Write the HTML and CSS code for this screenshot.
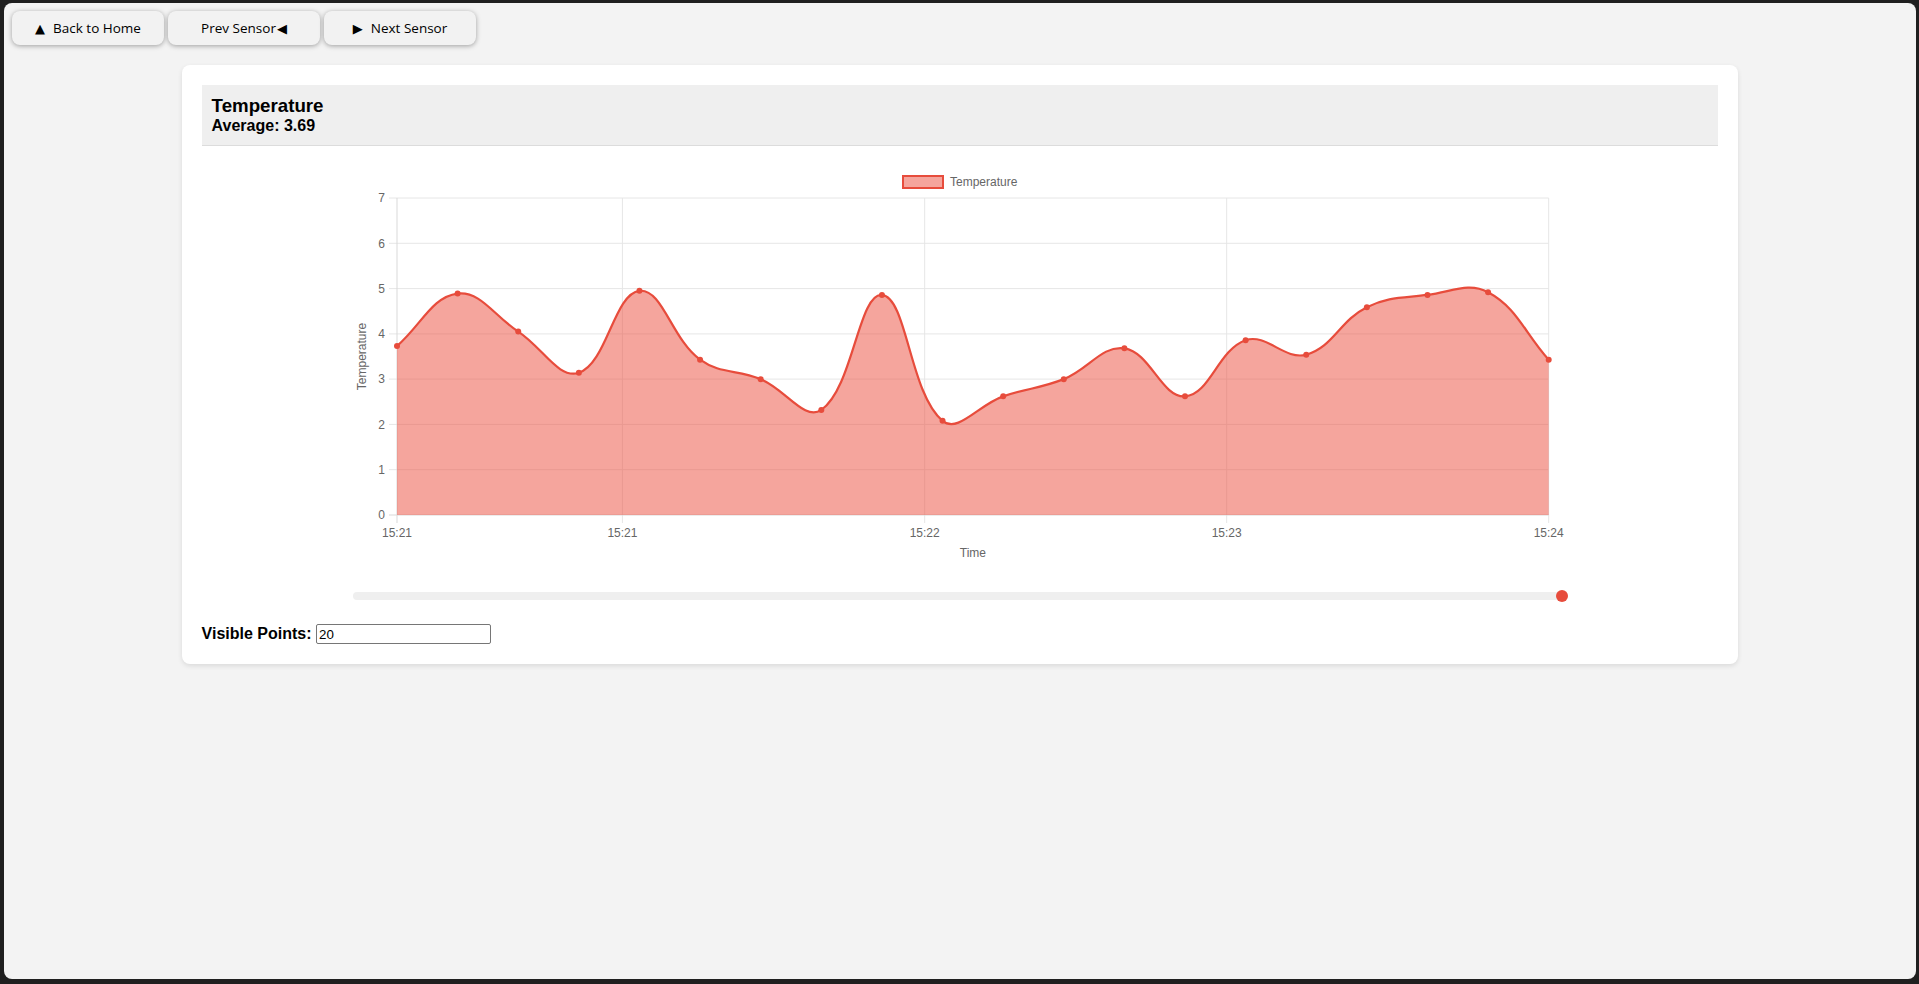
FILE: index.html
```html
<!DOCTYPE html>
<html lang="en">
<head>
<meta charset="utf-8">
<title>Sensor</title>
<link rel="stylesheet" href="styles.css">
</head>
<body>
<div class="window">
  <div class="nav">
    <button class="nav-btn"><span class="glyph glyph-left">▲</span>Back to Home</button>
    <button class="nav-btn">Prev Sensor<span class="glyph glyph-right">◀</span></button>
    <button class="nav-btn"><span class="glyph glyph-left">▶</span>Next Sensor</button>
  </div>

  <div class="card">
    <div class="card-header">
      <h3 class="card-title">Temperature</h3>
      <div class="card-avg">Average: 3.69</div>
    </div>

    <div class="chart-box">
      <svg class="chart" width="1213" height="400" viewBox="0 0 1213 400" xmlns="http://www.w3.org/2000/svg">
        <g class="grid">
          <line x1="36" y1="32" x2="1195.7" y2="32"/>
          <line x1="36" y1="77.3" x2="1195.7" y2="77.3"/>
          <line x1="36" y1="122.6" x2="1195.7" y2="122.6"/>
          <line x1="36" y1="167.9" x2="1195.7" y2="167.9"/>
          <line x1="36" y1="213.1" x2="1195.7" y2="213.1"/>
          <line x1="36" y1="258.4" x2="1195.7" y2="258.4"/>
          <line x1="36" y1="303.7" x2="1195.7" y2="303.7"/>
          <line x1="269.4" y1="32" x2="269.4" y2="357"/>
          <line x1="571.7" y1="32" x2="571.7" y2="357"/>
          <line x1="873.7" y1="32" x2="873.7" y2="357"/>
          <line x1="1195.7" y1="32" x2="1195.7" y2="357"/>
        </g>
        <g class="axis">
          <line x1="44" y1="32" x2="44" y2="357"/>
          <line x1="36" y1="349" x2="1195.7" y2="349"/>
        </g>
        <path id="area" class="area" d=""/>
        <path id="line" class="line" d=""/>
        <g id="points" class="points"></g>
        <g class="ylabels">
          <text x="32" y="36.3">7</text>
          <text x="32" y="81.6">6</text>
          <text x="32" y="126.9">5</text>
          <text x="32" y="172.2">4</text>
          <text x="32" y="217.4">3</text>
          <text x="32" y="262.7">2</text>
          <text x="32" y="308">1</text>
          <text x="32" y="353.3">0</text>
        </g>
        <g class="xlabels">
          <text x="44" y="371">15:21</text>
          <text x="269.4" y="371">15:21</text>
          <text x="571.7" y="371">15:22</text>
          <text x="873.7" y="371">15:23</text>
          <text x="1195.7" y="371">15:24</text>
        </g>
        <text class="axis-title" x="619.9" y="391">Time</text>
        <text class="axis-title" transform="translate(13 190.5) rotate(-90)">Temperature</text>
        <rect class="legend-box" x="550" y="10" width="40" height="12"/>
        <text class="legend-text" x="597" y="20">Temperature</text>
      </svg>
    </div>

    <div class="slider">
      <div class="slider-track"></div>
      <span class="slider-thumb"></span>
    </div>

    <div class="controls">
      <label class="controls-label" for="points">Visible Points:</label>
      <input class="controls-input" id="points" type="text" value="20">
    </div>
  </div>
</div>
<script src="script.js"></script>
</body>
</html>
```

FILE: styles.css
```css
html {
  background: #1f1f1f;
}

body {
  margin: 0;
  background: #1f1f1f;
}

.window {
  margin: 3px 3px 0 4px;
  height: 976px;
  box-sizing: border-box;
  padding: 8px;
  background: #f3f3f3;
  border-radius: 8px;
  overflow: hidden;
  font-family: "Liberation Sans", Arial, sans-serif;
}

.nav {
  display: flex;
  gap: 4px;
}

.nav-btn {
  width: 152px;
  height: 34px;
  display: flex;
  align-items: center;
  justify-content: center;
  padding: 0;
  border: none;
  border-radius: 8px;
  background: #f2f2f2;
  box-shadow: 0 1px 5px rgba(0, 0, 0, 0.35);
  font-family: "Open Sans", "Noto Sans", sans-serif;
  font-size: 13.5px;
  font-weight: 500;
  color: #000;
}

.glyph {
  font-family: "DejaVu Sans", sans-serif;
  font-size: 13px;
}

.glyph-left {
  margin-right: 8px;
}

.glyph-right {
  margin-left: 1px;
}

.card {
  width: 80%;
  margin: 20px auto 0;
  padding: 20px;
  background: #fff;
  border-radius: 8px;
  box-shadow: 0 2px 5px rgba(0, 0, 0, 0.1);
}

.card-header {
  background: #efefef;
  padding: 10px;
  border-bottom: 1px solid #dcdcdc;
}

.card-title {
  margin: 0;
  font-size: 18.72px;
  font-weight: bold;
  color: #000;
}

.card-avg {
  font-size: 16px;
  font-weight: bold;
  color: #000;
}

.chart-box {
  width: 80%;
  margin: 20px auto 0;
  height: 400px;
}

.chart {
  display: block;
  overflow: visible;
}

.grid line {
  stroke: #e6e6e6;
  stroke-width: 1;
}

.axis line {
  stroke: #d9d9d9;
  stroke-width: 1;
}

.area {
  fill: rgba(236, 76, 60, 0.5);
}

.line {
  fill: none;
  stroke: #e74c3c;
  stroke-width: 2.2;
}

.points circle {
  fill: #e74c3c;
}

.ylabels text {
  font-family: "Liberation Sans", Arial, sans-serif;
  font-size: 12px;
  fill: #666;
  text-anchor: end;
}

.xlabels text {
  font-family: "Liberation Sans", Arial, sans-serif;
  font-size: 12px;
  fill: #666;
  text-anchor: middle;
}

.axis-title {
  font-family: "Liberation Sans", Arial, sans-serif;
  font-size: 12px;
  fill: #666;
  text-anchor: middle;
}

.legend-box {
  fill: rgba(236, 76, 60, 0.5);
  stroke: #e74c3c;
  stroke-width: 2;
}

.legend-text {
  font-family: "Liberation Sans", Arial, sans-serif;
  font-size: 12px;
  fill: #666;
}

.slider {
  position: relative;
  width: 80%;
  margin: 26px auto 0;
  height: 8px;
}

.slider-track {
  height: 8px;
  border-radius: 4px;
  background: #efefef;
}

.slider-thumb {
  position: absolute;
  right: -1px;
  top: -2px;
  width: 12px;
  height: 12px;
  border-radius: 50%;
  background: #e74c3c;
}

.controls {
  margin-top: 24px;
  font-size: 16px;
  font-weight: bold;
  color: #000;
}

.controls-input {
  box-sizing: border-box;
  width: 175px;
  height: 20px;
  padding: 1px 2px;
  border: 1px solid #767676;
  border-radius: 2px;
  font-family: "Liberation Sans", Arial, sans-serif;
  font-size: 13.33px;
  font-weight: normal;
  color: #000;
  vertical-align: baseline;
}
```

FILE: script.js
```js
(function () {
  var data = [3.73, 4.89, 4.05, 3.14, 4.95, 3.43, 3.0, 2.32, 4.86, 2.08,
              2.62, 3.0, 3.68, 2.62, 3.86, 3.54, 4.59, 4.86, 4.92, 3.43];
  var L = 44, R = 1195.7, T = 32, B = 349, MAX = 7;
  var step = (R - L) / (data.length - 1);
  var pts = data.map(function (v, i) {
    return { x: L + i * step, y: B - v * (B - T) / MAX };
  });
  var t = 0.4;
  var cps = pts.map(function (p, i) {
    var prev = pts[i - 1] || p, next = pts[i + 1] || p;
    var d01 = Math.hypot(p.x - prev.x, p.y - prev.y);
    var d12 = Math.hypot(next.x - p.x, next.y - p.y);
    var s01 = d01 / (d01 + d12 || 1), s12 = d12 / (d01 + d12 || 1);
    var fa = t * s01, fb = t * s12;
    function cap(v, lo, hi) { return Math.max(lo, Math.min(hi, v)); }
    return {
      px: cap(p.x - fa * (next.x - prev.x), L, R),
      py: cap(p.y - fa * (next.y - prev.y), T, B),
      nx: cap(p.x + fb * (next.x - prev.x), L, R),
      ny: cap(p.y + fb * (next.y - prev.y), T, B)
    };
  });
  var d = 'M' + pts[0].x.toFixed(2) + ' ' + pts[0].y.toFixed(2);
  for (var i = 1; i < pts.length; i++) {
    d += ' C' + cps[i - 1].nx.toFixed(2) + ' ' + cps[i - 1].ny.toFixed(2) + ' ' +
         cps[i].px.toFixed(2) + ' ' + cps[i].py.toFixed(2) + ' ' +
         pts[i].x.toFixed(2) + ' ' + pts[i].y.toFixed(2);
  }
  document.getElementById('line').setAttribute('d', d);
  document.getElementById('area').setAttribute('d',
    d + ' L' + R + ' ' + B + ' L' + L + ' ' + B + ' Z');
  var g = document.getElementById('points');
  var ns = 'http://www.w3.org/2000/svg';
  pts.forEach(function (p) {
    var c = document.createElementNS(ns, 'circle');
    c.setAttribute('cx', p.x.toFixed(2));
    c.setAttribute('cy', p.y.toFixed(2));
    c.setAttribute('r', '3');
    g.appendChild(c);
  });
})();
```
